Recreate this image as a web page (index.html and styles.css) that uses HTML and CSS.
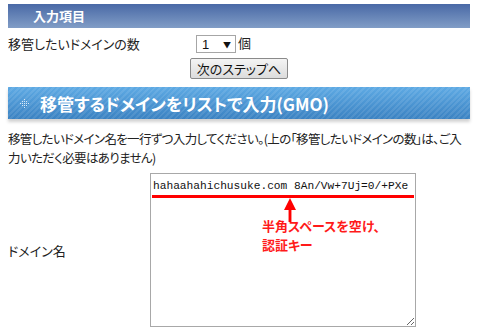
FILE: index.html
```html
<!DOCTYPE html>
<html lang="ja">
  <head>
    <meta charset="UTF-8" />
    <title>ドメイン移管</title>
    <link rel="stylesheet" href="styles.css">
  </head>
  <body>
    <h3 class="bar-title">入力項目</h3>

    <table class="form-table">
      <tr>
        <td class="label">移管したいドメインの数</td>
        <td>
          <span class="select-wrap">
            <select class="count">
              <option selected>1</option>
              <option>2</option>
              <option>3</option>
            </select>
          </span>個
        </td>
      </tr>
    </table>

    <div class="next-row">
      <button class="btn">次のステップへ</button>
    </div>

    <h2 class="stripe-title">
      <svg class="dots" width="9" height="9" viewBox="0 0 9 9">
        <g fill="#d8e8f8">
          <rect x="4" y="0" width="1" height="1" />
          <rect x="2" y="2" width="1" height="1" />
          <rect x="4" y="2" width="1" height="1" />
          <rect x="6" y="2" width="1" height="1" />
          <rect x="0" y="4" width="1" height="1" />
          <rect x="2" y="4" width="1" height="1" />
          <rect x="4" y="4" width="1" height="1" />
          <rect x="6" y="4" width="1" height="1" />
          <rect x="8" y="4" width="1" height="1" />
          <rect x="2" y="6" width="1" height="1" />
          <rect x="4" y="6" width="1" height="1" />
          <rect x="6" y="6" width="1" height="1" />
          <rect x="4" y="8" width="1" height="1" />
        </g>
      </svg>
      移管するドメインをリストで入力(GMO)
    </h2>

    <p class="note">
      移管したいドメイン名を一行ずつ入力してください。(上の「移管したいドメインの数」は、ご入力いただく必要はありません)
    </p>

    <table class="form-table list-table">
      <tr>
        <td class="label">ドメイン名</td>
        <td>
          <div class="area-wrap">
            <textarea class="domains" wrap="off" spellcheck="false">hahaahahichusuke.com 8An/Vw+7Uj=0/+PXe</textarea>
            <!-- annotation drawn over the textarea -->
            <div class="mark-line"></div>
            <div class="mark-arrow"></div>
            <div class="mark-text">半角スペースを空け、<br>認証キー</div>
          </div>
        </td>
      </tr>
    </table>
  </body>
</html>
```

FILE: styles.css
```css
* {
  box-sizing: border-box;
}

body {
  margin: 0;
  padding: 4px 8px 0;
  font-family: "Noto Sans CJK JP", "Noto Sans", sans-serif;
  font-size: 13px;
  font-feature-settings: "palt";
  color: #222;
  background: #fff;
}

/* plain gradient header */
.bar-title {
  margin: 0;
  height: 24px;
  padding-left: 25px;
  line-height: 24px;
  font-size: 13px;
  font-weight: bold;
  color: #fff;
  background: linear-gradient(#4969a6, #819dc6);
}

.form-table {
  border-collapse: collapse;
  width: 100%;
}

.form-table td {
  padding: 0;
}

.form-table .label {
  width: 188px;
  height: 30px;
}

.select-wrap {
  position: relative;
  display: inline-block;
  margin-right: 2px;
  vertical-align: middle;
}

.select-wrap::after {
  content: "▼";
  position: absolute;
  right: 5px;
  top: 4px;
  font-size: 8px;
  color: #111;
  pointer-events: none;
}

.count {
  display: block;
  width: 40px;
  height: 18px;
  padding: 0 0 0 5px;
  font-family: "Liberation Sans", sans-serif;
  font-size: 13px;
  color: #111;
  border: 1px solid #a6a6a6;
  background: #fff;
  appearance: none;
}

.next-row {
  text-align: center;
}

.btn {
  height: 21px;
  padding: 0 6px;
  font-family: "Noto Sans CJK JP", sans-serif;
  font-size: 13px;
  font-feature-settings: "palt";
  line-height: 17px;
  color: #111;
  border: 1px solid #8a8a8a;
  border-radius: 2px;
  background: linear-gradient(#f4f4f4, #dcdcdc);
}

/* striped blue header */
.stripe-title {
  display: flex;
  align-items: center;
  gap: 11px;
  margin: 8px 0 0;
  height: 32px;
  padding-left: 12px;
  font-size: 17px;
  font-weight: bold;
  color: #fff;
  background:
    repeating-linear-gradient(-45deg, rgba(255, 255, 255, 0.09) 0 2px, rgba(255, 255, 255, 0) 2px 4px),
    linear-gradient(#5eaae4, #3b82c2);
  box-shadow: 0 3px 3px rgba(0, 0, 0, 0.18);
}

.dots {
  flex: none;
}

.note {
  margin: 10px 0 6px;
  font-size: 12.5px;
  line-height: 19px;
  letter-spacing: -0.65px;
}

.list-table .label {
  width: 142px;
}

.area-wrap {
  position: relative;
  width: 266px;
}

.domains {
  display: block;
  width: 266px;
  height: 154px;
  margin: 0;
  padding: 5px 2px;
  font-family: "Liberation Mono", monospace;
  font-size: 11.2px;
  line-height: 15px;
  color: #111;
  border: 1px solid #a8a8a8;
  overflow: hidden;
  white-space: pre;
  resize: both;
}

.mark-line {
  position: absolute;
  left: 2px;
  top: 22px;
  width: 262px;
  height: 3px;
  background: #ff0000;
}

.mark-arrow {
  position: absolute;
  left: 134px;
  top: 25px;
  width: 12px;
  height: 24px;
  background: #ff0000;
  clip-path: polygon(50% 0, 100% 50%, 62% 50%, 62% 100%, 38% 100%, 38% 50%, 0 50%);
}

.mark-text {
  position: absolute;
  left: 112px;
  top: 43px;
  font-size: 13px;
  font-weight: bold;
  line-height: 19px;
  color: #ff1a1a;
  white-space: nowrap;
}
```
